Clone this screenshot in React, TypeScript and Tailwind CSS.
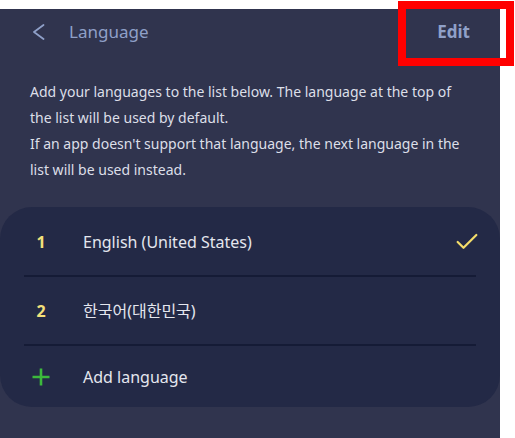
import { Check } from "lucide-react";

const languages = [
  { n: "1", name: "English (United States)", active: true },
  { n: "2", name: "한국어(대한민국)", active: false },
];

export default function App() {
  return (
    <div
      className="relative w-[515px] h-[438px] bg-white overflow-hidden"
      style={{ fontFamily: '"Noto Sans", "Noto Sans CJK KR", sans-serif' }}
    >
      <div className="mt-[9px] w-[500px] h-[429px] bg-[#30344e]">
        {/* header */}
        <div className="flex items-center h-[46px] pl-[32px] pr-[30px]">
          <svg width="13" height="16" viewBox="0 0 13 16" fill="none" className="text-[#8fa0c8]">
            <path d="M11.5 1 L2 8 L11.5 15" stroke="currentColor" strokeWidth="1.8" strokeLinecap="round" strokeLinejoin="round" />
          </svg>
          <span className="ml-[24px] text-[17px] text-[#8fa0c8] flex-1">Language</span>
          <span className="text-[17px] font-bold text-[#8fa0c8]">Edit</span>
        </div>

        <div className="pt-[24px] pl-[30px] pr-[40px] text-[14px] leading-[26px] text-[#dcdfe8]">
          <p>Add your languages to the list below. The language at the top of the list will be used by default.</p>
          <p>If an app doesn't support that language, the next language in the list will be used instead.</p>
        </div>

        <div className="mt-[24px] bg-[#232946] rounded-[32px] pt-[1px] px-[24px]">
          {languages.map(l => (
            <div key={l.n} className="flex items-center h-[69px] border-b-[2px] border-[#151b36]">
              <span className="w-[34px] text-center text-[16px] font-bold text-[#f3e07a]">{l.n}</span>
              <span className="ml-[25px] flex-1 text-[16px] text-[#e4e6ee]">{l.name}</span>
              {l.active && <Check className="w-[28px] h-[28px] mr-[-5px] text-[#f3dc6a]" strokeWidth={1.9} />}
            </div>
          ))}
          <div className="flex items-center h-[61px]">
            <span className="w-[34px] flex justify-center">
              <svg width="18" height="18" viewBox="0 0 18 18" className="text-[#3cb93c]">
                <path d="M9 0.5 V17.5 M0.5 9 H17.5" stroke="currentColor" strokeWidth="2.6" />
              </svg>
            </span>
            <span className="ml-[25px] text-[16px] text-[#e4e6ee]">Add language</span>
          </div>
        </div>
      </div>

      {/* highlight box */}
      <div className="absolute left-[398px] top-[1px] w-[116px] h-[65px] border-[8px] border-[#ff0000]" />
    </div>
  );
}
